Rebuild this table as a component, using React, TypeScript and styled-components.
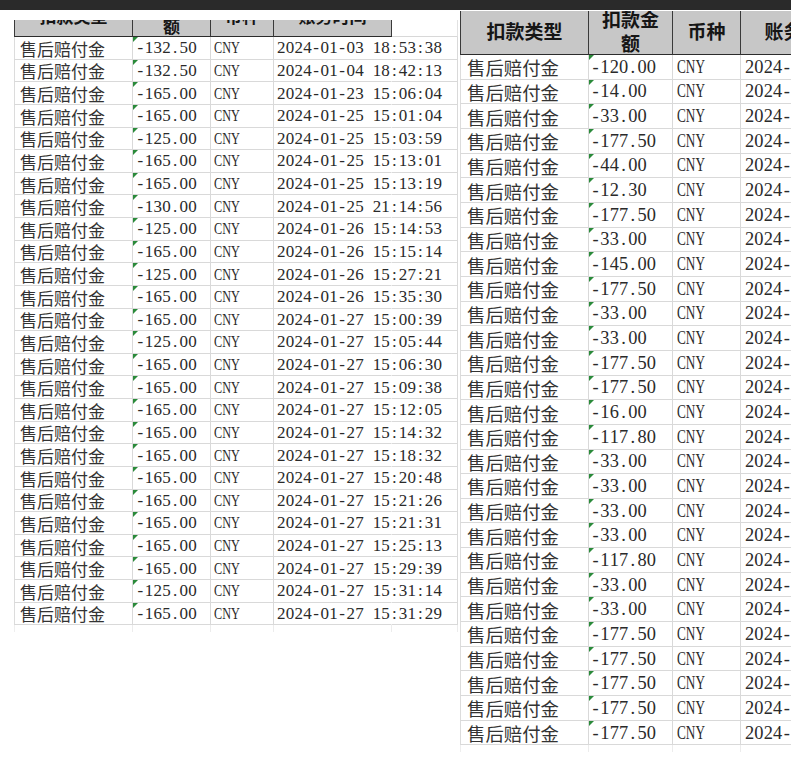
import * as React from "react";
import styled, { createGlobalStyle } from "styled-components";

const GlobalStyle = createGlobalStyle`
  html, body {
    margin: 0;
    padding: 0;
    background: #ffffff;
    overflow: hidden;
  }
  body {
    font-family: "Noto Sans CJK SC", "Noto Sans", sans-serif;
  }
`;

interface SheetSpec {
  cols: number[];
  pads: number[];
  rowHeight: number;
  size: number;
  charWidth: number;
  headSize: number;
  headLine: number;
  headVisible: number;
  headFull: number;
  tail: number;
}

const TopBar = styled.div`
  height: 10px;
  background: #2a2a2a;
`;

const Stage = styled.div`
  display: flex;
  align-items: flex-start;
`;

const Frame = styled.div<{ $top: number; $left: number; $grow?: boolean }>`
  margin-top: ${p => p.$top}px;
  margin-left: ${p => p.$left}px;
  flex: ${p => (p.$grow ? "1 1 0" : "none")};
  min-width: 0;
  overflow: hidden;
`;

const Grid = styled.div<{ $cols: number[]; $row: number }>`
  display: grid;
  grid-template-columns: ${p => p.$cols.map(c => `${c}px`).join(" ")};
  grid-auto-rows: ${p => p.$row}px;
`;

const HeadCell = styled.div<{ $blank?: boolean }>`
  display: flex;
  align-items: flex-end;
  overflow: hidden;
  box-sizing: border-box;
  background: ${p => (p.$blank ? "#ffffff" : "#c7c7c7")};
  border-right: 1px solid ${p => (p.$blank ? "#e2e2e2" : "#3a3a3a")};
  border-bottom: 1px solid ${p => (p.$blank ? "#d8d8d8" : "#2c2c2c")};
  &:first-child {
    border-left: 1px solid #3a3a3a;
  }
`;

const HeadLabel = styled.div<{ $h: number; $size: number; $line: number }>`
  flex: none;
  width: 100%;
  height: ${p => p.$h}px;
  display: flex;
  align-items: center;
  justify-content: center;
  text-align: center;
  white-space: nowrap;
  font-weight: 700;
  font-size: ${p => p.$size}px;
  line-height: ${p => p.$line}px;
  color: #161616;
`;

const Cell = styled.div<{
  $pad: number;
  $size: number;
  $flag?: boolean;
  $first?: boolean;
  $spill?: boolean;
}>`
  position: relative;
  display: flex;
  align-items: center;
  box-sizing: border-box;
  padding-left: ${p => p.$pad}px;
  padding-top: 1px;
  border-right: 1px solid ${p => (p.$spill ? "transparent" : "#d9d9d9")};
  border-bottom: 1px solid #d9d9d9;
  border-left: ${p => (p.$first ? "1px solid #dcdcdc" : "none")};
  white-space: nowrap;
  color: #333333;
  font-size: ${p => p.$size}px;
  &::before {
    content: "";
    display: ${p => (p.$flag ? "block" : "none")};
    position: absolute;
    top: 0;
    left: 0;
    border-top: 5px solid #2a8a3a;
    border-right: 5px solid transparent;
  }
`;

const TailCell = styled.div<{ $first?: boolean }>`
  border-right: 1px solid #ececec;
  border-left: ${p => (p.$first ? "1px solid #eeeeee" : "none")};
`;

const Ascii = styled.span`
  font-family: "Liberation Serif", serif;
  color: #2a2a2a;
`;

const Glyph = styled.span<{ $w: number }>`
  display: inline-block;
  width: ${p => p.$w}px;
  text-align: center;
`;

const Narrow = styled.span`
  display: inline-block;
  font-family: "Liberation Serif", serif;
  color: #2a2a2a;
  transform: scaleX(0.72);
  transform-origin: left center;
`;

// half-width cells, the way the sheet's font lays out latin text
const Mono = ({ text, w }: { text: string; w: number }) => (
  <Ascii>
    {[...text].map((c, i) => (
      <Glyph key={i} $w={w}>
        {c}
      </Glyph>
    ))}
  </Ascii>
);

const leftSpec: SheetSpec = {
  cols: [119, 78, 63, 118, 66],
  pads: [5, 3, 3, 3, 0],
  rowHeight: 22.64,
  size: 17,
  charWidth: 8.7,
  headSize: 17,
  headLine: 20,
  headVisible: 17,
  headFull: 41,
  tail: 7,
};

const rightSpec: SheetSpec = {
  cols: [129, 84, 68, 124],
  pads: [6, 2, 4, 4],
  rowHeight: 24.67,
  size: 18.4,
  charWidth: 9.3,
  headSize: 19,
  headLine: 24,
  headVisible: 44,
  headFull: 46,
  tail: 7,
};

const leftRows: [string, string][] = [
  ["-132.50", "2024-01-03 18:53:38"],
  ["-132.50", "2024-01-04 18:42:13"],
  ["-165.00", "2024-01-23 15:06:04"],
  ["-165.00", "2024-01-25 15:01:04"],
  ["-125.00", "2024-01-25 15:03:59"],
  ["-165.00", "2024-01-25 15:13:01"],
  ["-165.00", "2024-01-25 15:13:19"],
  ["-130.00", "2024-01-25 21:14:56"],
  ["-125.00", "2024-01-26 15:14:53"],
  ["-165.00", "2024-01-26 15:15:14"],
  ["-125.00", "2024-01-26 15:27:21"],
  ["-165.00", "2024-01-26 15:35:30"],
  ["-165.00", "2024-01-27 15:00:39"],
  ["-125.00", "2024-01-27 15:05:44"],
  ["-165.00", "2024-01-27 15:06:30"],
  ["-165.00", "2024-01-27 15:09:38"],
  ["-165.00", "2024-01-27 15:12:05"],
  ["-165.00", "2024-01-27 15:14:32"],
  ["-165.00", "2024-01-27 15:18:32"],
  ["-165.00", "2024-01-27 15:20:48"],
  ["-165.00", "2024-01-27 15:21:26"],
  ["-165.00", "2024-01-27 15:21:31"],
  ["-165.00", "2024-01-27 15:25:13"],
  ["-165.00", "2024-01-27 15:29:39"],
  ["-125.00", "2024-01-27 15:31:14"],
  ["-165.00", "2024-01-27 15:31:29"],
];

const rightAmounts = [
  "-120.00", "-14.00", "-33.00", "-177.50", "-44.00", "-12.30", "-177.50",
  "-33.00", "-145.00", "-177.50", "-33.00", "-33.00", "-177.50", "-177.50",
  "-16.00", "-117.80", "-33.00", "-33.00", "-33.00", "-33.00", "-117.80",
  "-33.00", "-33.00", "-177.50", "-177.50", "-177.50", "-177.50", "-177.50",
];

// only the leading "2024-" of these stays inside the window
const rightRows: [string, string][] = rightAmounts.map((a, i) => [
  a,
  `2024-02-${String((i % 28) + 1).padStart(2, "0")} 16:${String(10 + i).padStart(2, "0")}:05`,
]);

const headers: React.ReactNode[] = [
  "扣款类型",
  <>
    扣款金
    <br />额
  </>,
  "币种",
  "账务时间",
];

function Sheet({ spec, rows }: { spec: SheetSpec; rows: [string, string][] }) {
  const extra = spec.cols.length - 4;
  // the time text runs over into the empty column, which hides that gridline
  const spill = extra > 0;
  return (
    <>
      <Grid $cols={spec.cols} $row={spec.headVisible}>
        {headers.map((h, i) => (
          <HeadCell key={i}>
            <HeadLabel $h={spec.headFull} $size={spec.headSize} $line={spec.headLine}>
              <span>{h}</span>
            </HeadLabel>
          </HeadCell>
        ))}
        {Array.from({ length: extra }).map((_, i) => (
          <HeadCell key={`x${i}`} $blank />
        ))}
      </Grid>
      <Grid $cols={spec.cols} $row={spec.rowHeight}>
        {rows.map(([amount, time], r) => (
          <React.Fragment key={r}>
            <Cell $pad={spec.pads[0]} $size={spec.size} $first>
              售后赔付金
            </Cell>
            <Cell $pad={spec.pads[1]} $size={spec.size} $flag>
              <Mono text={amount} w={spec.charWidth} />
            </Cell>
            <Cell $pad={spec.pads[2]} $size={spec.size}>
              <Narrow>CNY</Narrow>
            </Cell>
            <Cell $pad={spec.pads[3]} $size={spec.size} $spill={spill}>
              <Mono text={time} w={spec.charWidth} />
            </Cell>
            {Array.from({ length: extra }).map((_, i) => (
              <Cell key={i} $pad={0} $size={spec.size} />
            ))}
          </React.Fragment>
        ))}
      </Grid>
      <Grid $cols={spec.cols} $row={spec.tail}>
        {spec.cols.map((_, i) => (
          <TailCell key={i} $first={i === 0} />
        ))}
      </Grid>
    </>
  );
}

export default function App() {
  return (
    <>
      <GlobalStyle />
      <TopBar />
      <Stage>
        <Frame $top={10} $left={14}>
          <Sheet spec={leftSpec} rows={leftRows} />
        </Frame>
        <Frame $top={1} $left={2} $grow>
          <Sheet spec={rightSpec} rows={rightRows} />
        </Frame>
      </Stage>
    </>
  );
}
